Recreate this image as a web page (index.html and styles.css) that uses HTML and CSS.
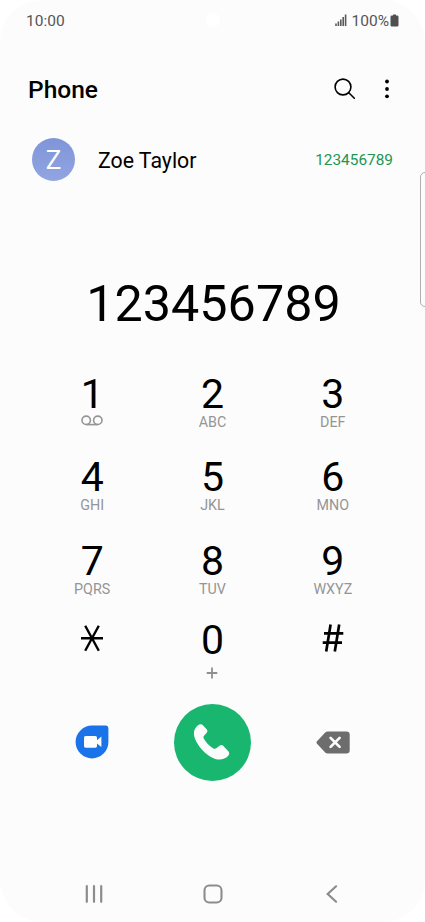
FILE: index.html
```
<!DOCTYPE html>
<html lang="en">
<head>
    <meta charset="UTF-8">
    <meta name="viewport" content="width=device-width, initial-scale=1.0">
    <link rel="stylesheet" href="styles.css">
    <title>Phone</title>
</head>
<body>
<div class="screen">
    <div class="status-bar">
        <span class="time">10:00</span>
        <span class="camera"></span>
        <div class="status-icons">
            <svg class="signal" width="12" height="12" viewBox="0 0 12 12">
                <path d="M1 12V9.4M3.4 12V7.6M5.8 12V5.4M8.2 12V3M10.6 12V0.5" stroke="#5a5a5a" stroke-width="1.6"/>
            </svg>
            <span>100%</span>
            <svg class="battery" width="9" height="13" viewBox="0 0 9 13">
                <path d="M3 0.4h3v1.2h1.2a1.3 1.3 0 0 1 1.3 1.3v8.3a1.3 1.3 0 0 1-1.3 1.3H1.8a1.3 1.3 0 0 1-1.3-1.3V2.9a1.3 1.3 0 0 1 1.3-1.3H3z" fill="#505050"/>
            </svg>
        </div>
    </div>

    <header class="header">
        <h1>Phone</h1>
        <button class="icon-button" aria-label="Search">
            <svg width="24" height="24" viewBox="0 0 24 24" fill="none" stroke="#000" stroke-width="1.6" stroke-linecap="round">
                <circle cx="10" cy="10" r="7.9"/>
                <path d="M15.8 15.8L21.3 21.3"/>
            </svg>
        </button>
        <button class="icon-button more" aria-label="More options">
            <svg width="6" height="24" viewBox="0 0 6 24">
                <circle cx="3" cy="4.5" r="1.9"/>
                <circle cx="3" cy="12" r="1.9"/>
                <circle cx="3" cy="19.3" r="1.9"/>
            </svg>
        </button>
    </header>

    <div class="contact">
        <span class="avatar">Z</span>
        <span class="contact-name">Zoe Taylor</span>
        <span class="contact-number">123456789</span>
    </div>

    <div class="dialed">123456789</div>

    <div class="keypad">
        <button class="key">
            <span class="digit">1</span>
            <svg class="voicemail" width="22" height="11" viewBox="0 0 22 11" fill="none" stroke="#959595" stroke-width="1.6">
                <circle cx="5.2" cy="5.3" r="4.2"/>
                <circle cx="16.8" cy="5.3" r="4.2"/>
                <path d="M5.2 9.6H16.8"/>
            </svg>
        </button>
        <button class="key"><span class="digit">2</span><span class="letters">ABC</span></button>
        <button class="key"><span class="digit">3</span><span class="letters">DEF</span></button>
        <button class="key"><span class="digit">4</span><span class="letters">GHI</span></button>
        <button class="key"><span class="digit">5</span><span class="letters">JKL</span></button>
        <button class="key"><span class="digit">6</span><span class="letters">MNO</span></button>
        <button class="key"><span class="digit">7</span><span class="letters">PQRS</span></button>
        <button class="key"><span class="digit">8</span><span class="letters">TUV</span></button>
        <button class="key"><span class="digit">9</span><span class="letters">WXYZ</span></button>
        <button class="key" aria-label="Star">
            <svg class="star" width="24" height="28" viewBox="0 0 24 28" fill="none" stroke="#000" stroke-width="2.4">
                <path d="M1 14.2H23M5.2 1.7L18.8 26.7M18.8 1.7L5.2 26.7"/>
            </svg>
        </button>
        <button class="key">
            <span class="digit">0</span>
            <svg class="plus" width="12" height="12" viewBox="0 0 12 12" fill="none" stroke="#8f8f8f" stroke-width="1.8">
                <path d="M0.7 6H11.3M6 0.5V11.5"/>
            </svg>
        </button>
        <button class="key" aria-label="Hash">
            <svg class="hash" width="22" height="28" viewBox="0 0 22 28" fill="none" stroke="#000" stroke-width="2.7">
                <path d="M8.6 0.5L4.2 27.5M17.2 0.5L12.8 27.5M2 9.4H21.3M0.7 18.6H20"/>
            </svg>
        </button>
    </div>

    <div class="actions">
        <button class="icon-button" aria-label="Video call">
            <svg width="34" height="34" viewBox="0 0 34 34">
                <path d="M17 0.6H31a2.6 2.6 0 0 1 2.4 2.6V17A16.4 16.4 0 1 1 17 0.6z" fill="#1a73e8"/>
                <rect x="9" y="10.9" width="13" height="11.8" rx="1.6" fill="#fff"/>
                <path d="M21.4 15.7L26.4 11.6V22L21.4 17.9z" fill="#fff"/>
            </svg>
        </button>
        <button class="call-button" aria-label="Call">
            <svg width="38" height="38" viewBox="0 0 38 38" fill="#fcfcfc">
                <path d="M5 2.3C6.7 0.9 8.7 0.9 10.1 2.4L13.6 6.2C14.7 7.4 14.7 8.5 13.7 9.7L11.2 12.4C10.3 13.4 10.2 14.5 10.9 15.8C13 19.6 16.1 22.7 20 25.2C21.3 26 22.6 26 23.7 25L26.8 22.6C28.1 21.7 29.3 21.8 30.4 22.9L35.3 28.2C36.5 29.5 36.5 31.5 35.2 32.8C31.5 36.9 25.6 37.8 20 35C12 30.9 5.5 24.1 2.1 15.9C-0.1 10.5 0.7 5.8 5 2.3z"/>
            </svg>
        </button>
        <button class="icon-button" aria-label="Delete">
            <svg width="34" height="23" viewBox="0 0 34 23">
                <path d="M11.7 0.5H30.4a3.3 3.3 0 0 1 3.3 3.3V19.2a3.3 3.3 0 0 1-3.3 3.3H11.7a3.5 3.5 0 0 1-2.5-1L1 12.7a1.8 1.8 0 0 1 0-2.4L9.2 1.5a3.5 3.5 0 0 1 2.5-1z" fill="#6d6d6d"/>
                <path d="M14.6 6.9L23.6 15.9M23.6 6.9L14.6 15.9" stroke="#fcfcfc" stroke-width="2.7" stroke-linecap="round"/>
            </svg>
        </button>
    </div>

    <nav class="nav-bar">
        <button class="icon-button" aria-label="Recents">
            <svg width="20" height="20" viewBox="0 0 20 20" stroke="#8c8c8c" stroke-width="2.2" stroke-linecap="round">
                <path d="M2.8 2.2V17.8M10 2.2V17.8M17.2 2.2V17.8"/>
            </svg>
        </button>
        <button class="icon-button" aria-label="Home">
            <svg width="20" height="20" viewBox="0 0 20 20" fill="none" stroke="#8c8c8c" stroke-width="2.1">
                <rect x="1.5" y="1.5" width="17" height="17" rx="4.8"/>
            </svg>
        </button>
        <button class="icon-button" aria-label="Back">
            <svg width="20" height="20" viewBox="0 0 20 20" fill="none" stroke="#8c8c8c" stroke-width="2.2" stroke-linecap="round">
                <path d="M14.1 2.3L5.7 10L14.1 17.7"/>
            </svg>
        </button>
    </nav>

    <!-- edge panel handle -->
    <div class="edge-handle"></div>
</div>
</body>
</html>
```
FILE: styles.css
```
* {
    box-sizing: border-box;
}

body {
    margin: 0;
    background-color: #ffffff;
    font-family: Roboto, "Liberation Sans", sans-serif;
    color: #000000;
}

button {
    padding: 0;
    border: none;
    background: none;
    font: inherit;
    color: inherit;
    cursor: pointer;
}

svg {
    display: block;
}

.screen {
    position: relative;
    display: flex;
    flex-direction: column;
    width: 425px;
    height: 922px;
    background-color: #fcfcfc;
    border-radius: 42px;
    overflow: hidden;
}

/* status bar */
.status-bar {
    display: grid;
    grid-template-columns: 1fr 14px 1fr;
    align-items: center;
    height: 40px;
    padding: 0 26px;
    font-size: 15.5px;
    color: #555555;
}

.time {
    padding-top: 1px;
}

.camera {
    width: 14px;
    height: 14px;
    border-radius: 50%;
    background-color: #ffffff;
}

.status-icons {
    display: flex;
    justify-content: flex-end;
    align-items: center;
}

.status-icons span {
    padding-top: 1px;
}

.signal {
    margin-right: 5px;
}

.battery {
    margin-left: 1px;
}

/* header */
.header {
    display: flex;
    align-items: center;
    height: 50px;
    margin-top: 24px;
    padding: 0 35px 0 28px;
}

.header h1 {
    flex: 1;
    margin: 0;
    padding-top: 1px;
    font-size: 24.5px;
    font-weight: 500;
}

.more {
    margin-left: 27px;
}

/* suggested contact */
.contact {
    display: flex;
    align-items: center;
    height: 44px;
    margin-top: 23px;
    padding: 0 32px;
}

.avatar {
    width: 43px;
    height: 43px;
    border-radius: 50%;
    background: linear-gradient(#7f95d8, #92a5e2);
    color: #ffffff;
    font-size: 26px;
    line-height: 45px;
    text-align: center;
}

.contact-name {
    flex: 1;
    margin-left: 23px;
    padding-top: 2px;
    font-size: 21.3px;
}

.contact-number {
    padding-top: 2px;
    font-size: 15.4px;
    color: #219653;
}

.dialed {
    margin-top: 93px;
    height: 60px;
    padding-left: 2px;
    font-size: 50.3px;
    line-height: 60px;
    text-align: center;
}

/* keypad */
.keypad {
    display: grid;
    grid-template-columns: repeat(3, 1fr);
    grid-template-rows: 83px 84px 79px 80px;
    width: 361px;
    margin: 40px 0 0 32px;
}

.key {
    display: flex;
    flex-direction: column;
    align-items: center;
}

.digit {
    font-size: 41px;
    line-height: 40px;
}

.letters {
    font-size: 14.3px;
    line-height: 17px;
    color: #959595;
}

.voicemail {
    margin-top: 1px;
}

.star {
    margin-top: 4px;
}

.plus {
    margin-top: 7px;
}

.hash {
    margin-top: 4px;
}

/* call row */
.actions {
    display: grid;
    grid-template-columns: repeat(3, 1fr);
    place-items: center;
    width: 361px;
    height: 78px;
    margin: 3px 0 0 32px;
}

.call-button {
    display: flex;
    justify-content: center;
    align-items: center;
    width: 77px;
    height: 77px;
    border-radius: 50%;
    background-color: #18b66e;
}

/* system navigation */
.nav-bar {
    display: grid;
    grid-template-columns: repeat(3, 119px);
    place-items: center;
    height: 56px;
    margin-top: auto;
    margin-left: 34px;
}

.edge-handle {
    position: absolute;
    top: 172px;
    right: -8px;
    width: 13px;
    height: 135px;
    border: 1px solid #b0b0b0;
    border-radius: 5px;
}
```
